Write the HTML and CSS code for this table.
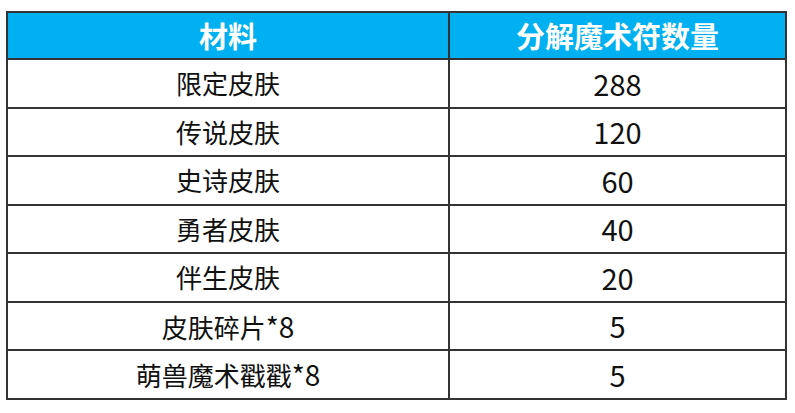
FILE: index.html
```html
<!DOCTYPE html>
<html lang="zh">
<head>
<meta charset="utf-8">
<link rel="stylesheet" href="styles.css">
</head>
<body>
<table class="tbl">
  <thead>
    <tr><th class="c1">材料</th><th class="c2">分解魔术符数量</th></tr>
  </thead>
  <tbody>
    <tr><td>限定皮肤</td><td class="num">288</td></tr>
    <tr><td>传说皮肤</td><td class="num">120</td></tr>
    <tr><td>史诗皮肤</td><td class="num">60</td></tr>
    <tr><td>勇者皮肤</td><td class="num">40</td></tr>
    <tr><td>伴生皮肤</td><td class="num">20</td></tr>
    <tr><td>皮肤碎片<span class="lat">*8</span></td><td class="num">5</td></tr>
    <tr><td>萌兽魔术戳戳<span class="lat">*8</span></td><td class="num">5</td></tr>
  </tbody>
</table>
</body>
</html>
```
FILE: styles.css
```css
html, body {
  margin: 0;
  padding: 0;
  background: #ffffff;
}
body {
  padding: 11px 0 0 6px;
  font-family: "Noto Sans CJK SC", "Noto Sans", sans-serif;
}
.tbl {
  border-collapse: collapse;
  width: 781px;
  table-layout: fixed;
}
.tbl th, .tbl td {
  border: 2px solid #333333;
  text-align: center;
  padding: 0;
  line-height: 1;
}
.tbl th {
  background: #00b0f0;
  color: #ffffff;
  font-weight: 700;
  font-size: 29px;
  height: 45px;
}
.tbl .c1 { width: 440px; }
.tbl td {
  color: #111111;
  font-size: 26px;
  font-weight: 400;
  height: 46.5px;
}
.tbl td.num {
  font-size: 29px;
}
.lat {
  font-size: 28px;
}
```
